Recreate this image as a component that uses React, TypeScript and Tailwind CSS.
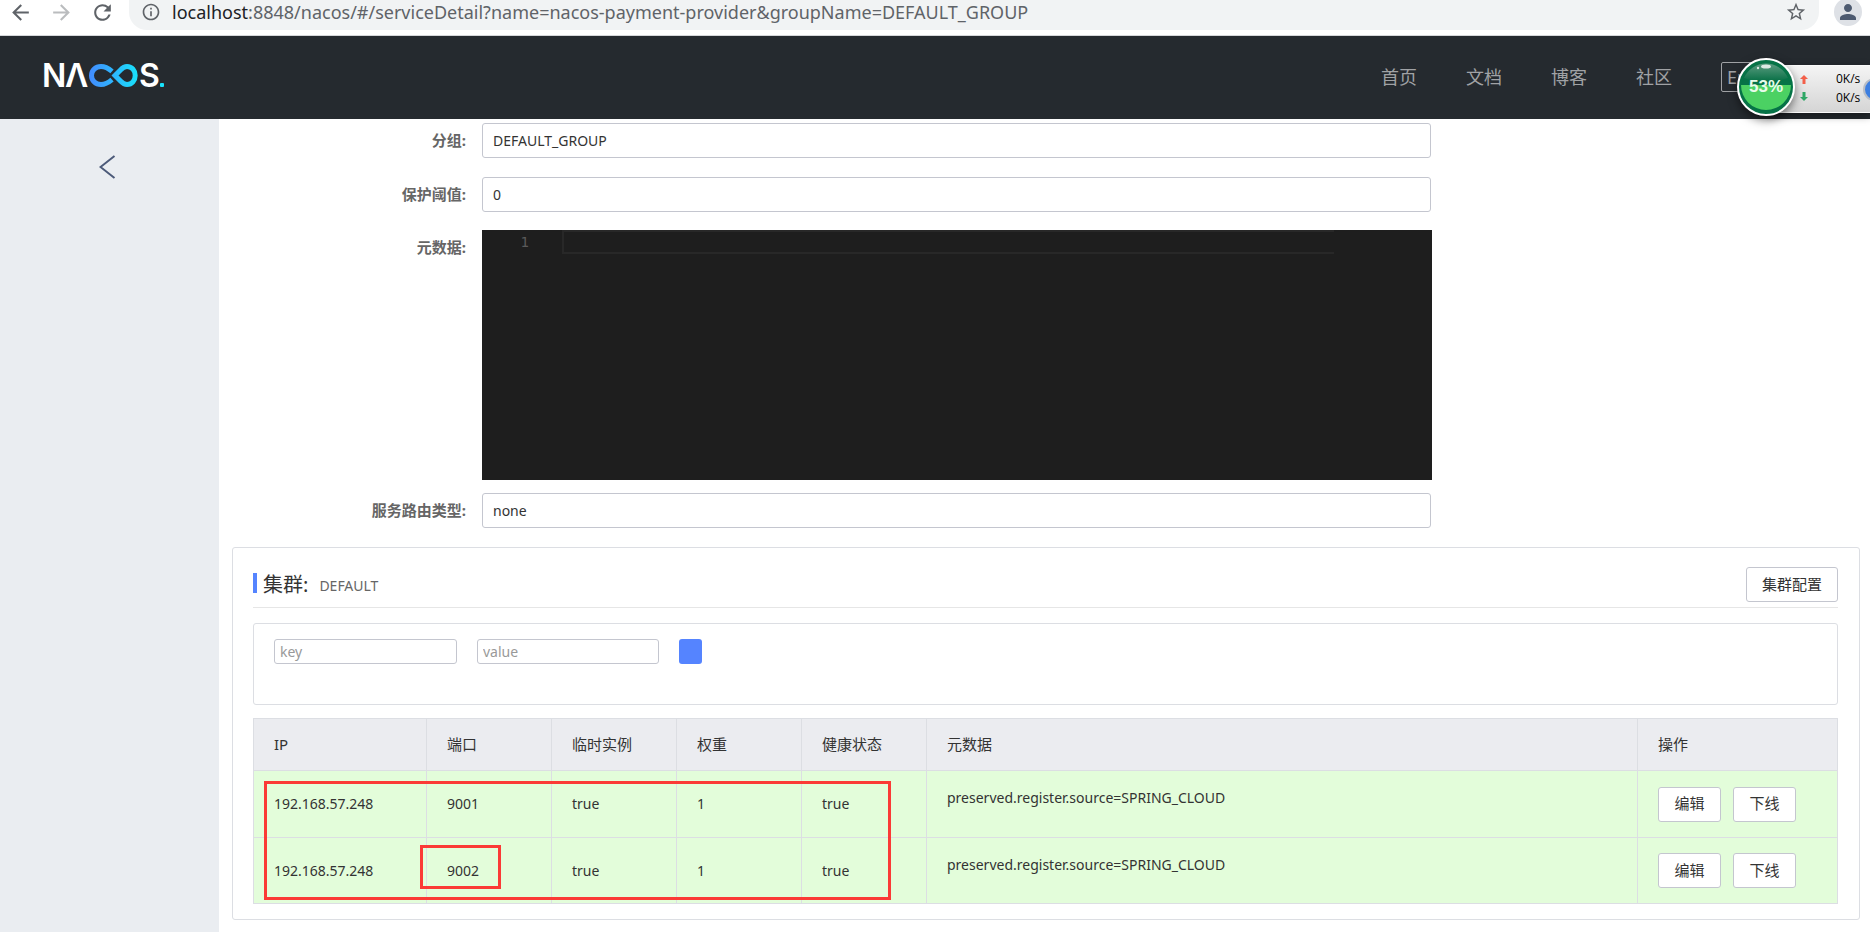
import { MdArrowBack, MdArrowForward, MdRefresh, MdInfoOutline, MdStarBorder, MdPerson } from "react-icons/md";

const navLinks = ["首页", "文档", "博客", "社区"];

const instances = [
  { ip: "192.168.57.248", port: "9001", ephemeral: "true", weight: "1", healthy: "true", metadata: "preserved.register.source=SPRING_CLOUD" },
  { ip: "192.168.57.248", port: "9002", ephemeral: "true", weight: "1", healthy: "true", metadata: "preserved.register.source=SPRING_CLOUD" },
];

const BrowserBar = () => (
  <div className="flex h-9 items-start border-b border-[#d5d7da] bg-white pl-2 pr-2">
    <div className="flex h-6 w-[121px] shrink-0 items-center gap-4 text-[#5f6368]">
      <button aria-label="Back"><MdArrowBack size={25} /></button>
      <button aria-label="Forward" className="text-[#babcbe]"><MdArrowForward size={25} /></button>
      <button aria-label="Reload"><MdRefresh size={25} /></button>
    </div>
    <div className="flex h-[30px] min-w-0 flex-1 items-start rounded-b-[18px] bg-[#f1f3f4] pl-3 pr-3">
      <div className="flex h-6 min-w-0 flex-1 items-center">
        <MdInfoOutline size={20} className="shrink-0 text-[#5f6368]" />
        <span className="ml-[11px] whitespace-nowrap text-[18px] leading-6 text-[#5f6368]">
          <span className="text-[#202124]">localhost</span>
          :8848/nacos/#/serviceDetail?name=nacos-payment-provider&amp;groupName=DEFAULT_GROUP
        </span>
      </div>
      <button aria-label="Bookmark" className="flex h-6 items-center text-[#5f6368]"><MdStarBorder size={22} /></button>
    </div>
    <button aria-label="Profile" className="-mt-[2px] ml-[15px] flex h-7 w-7 items-center justify-center rounded-full bg-[#dee1e6] text-[#4d5a70]">
      <MdPerson size={24} />
    </button>
  </div>
);

const Logo = () => (
  <svg width="132" height="48" viewBox="-6 -11 132 48" role="img" aria-label="NACOS">
    <defs>
      <linearGradient id="loop" x1="44" y1="0" x2="94" y2="0" gradientUnits="userSpaceOnUse">
        <stop offset="0" stopColor="#4489ff" />
        <stop offset="1" stopColor="#18e2fb" />
      </linearGradient>
    </defs>
    <g fill="#fff" fontFamily="Inter, sans-serif" fontWeight="600" fontSize="32">
      <text x="-2" y="23">N</text>
      <text x="21" y="23">Λ</text>
      <text x="95" y="23">S</text>
    </g>
    <g fill="none" stroke="url(#loop)" strokeWidth="5">
      <path d="M68 7.4 C64 4 61 2.5 57 2.5 C51.5 2.5 47.5 6.4 47.5 11.5 C47.5 16.6 51.5 20.5 57 20.5 C61 20.5 64 19 68 15.6" />
      <path d="M71 11.5 L76.5 5.9 C78.7 3.6 80.4 2.5 83 2.5 C88 2.5 91.2 6.6 91.2 11.5 C91.2 16.4 88 20.5 83 20.5 C80.4 20.5 78.7 19.4 76.5 17.1 Z" />
    </g>
    <rect x="116" y="19" width="4" height="4" rx="1" fill="#18e2fb" />
  </svg>
);

const SpeedWidget = () => (
  <div className="absolute right-0 top-[58px] h-[58px] w-[133px]">
    <div className="absolute right-0 top-[7px] flex h-12 w-[103px] items-center overflow-hidden border-y border-[#fafafa] bg-gradient-to-b from-[#f4f4f4] to-[#d5d5d5] pb-[2px] pl-[33px] shadow-[0_3px_8px_rgba(0,0,0,0.4)]">
      <div className="flex flex-col gap-2">
        <svg width="8" height="9" viewBox="0 0 8 9"><path d="M4 0 L8 4 H5.5 V9 H2.5 V4 H0 Z" fill="#f4604a" /></svg>
        <svg width="8" height="9" viewBox="0 0 8 9"><path d="M4 9 L0 5 H2.5 V0 H5.5 V5 H8 Z" fill="#2fa866" /></svg>
      </div>
      <div className="ml-7 flex flex-col whitespace-nowrap font-['Open_Sans',sans-serif] text-xs leading-[19px] text-black">
        <span>0K/s</span>
        <span>0K/s</span>
      </div>
      <span className="absolute -right-4 top-3 h-[23px] w-[23px] rounded-full border-2 border-[#b9bec6] bg-[#3d7fe0]" />
    </div>
    <div className="absolute left-0 top-0 flex h-[58px] w-[58px] items-center justify-center rounded-full border-2 border-white bg-[#067347] shadow-[0_4px_10px_rgba(0,0,0,0.5)]">
      <svg className="absolute inset-[2px]" width="50" height="50" viewBox="0 0 50 50">
        <defs>
          <linearGradient id="shine" x1="0" y1="0" x2="0" y2="1">
            <stop offset="0" stopColor="#5b9b80" />
            <stop offset="1" stopColor="#046e43" />
          </linearGradient>
        </defs>
        <circle cx="25" cy="25" r="24" fill="#067347" />
        <path d="M3 16 A24 24 0 0 1 47 16 Q25 24 3 16 Z" fill="url(#shine)" />
        <path d="M0 23 H50 A25 25 0 0 1 0 23 Z" fill="#4bd163" />
        <ellipse cx="25" cy="4.5" rx="5" ry="2" fill="#fff" opacity="0.8" />
        <circle cx="17" cy="6" r="1.2" fill="#fff" opacity="0.8" />
      </svg>
      <span className="relative font-['Liberation_Sans',sans-serif] text-[17px] font-bold text-[#e8fbea]">53%</span>
    </div>
  </div>
);

const SiteHeader = () => (
  <header className="flex h-[83px] items-center justify-between bg-[#252a2f] pb-[2px] pl-[38px] pr-[116px]">
    <a href="#home"><Logo /></a>
    <nav className="flex items-center gap-[49px] text-lg text-[#a0a2a5]">
      {navLinks.map((label) => (
        <a key={label} href="#nav">{label}</a>
      ))}
      <button className="h-[30px] w-[33px] rounded-[2px] border border-[#a0a2a5] leading-7">En</button>
    </nav>
  </header>
);

const TextField = ({ id, label, value }: { id: string; label: string; value: string }) => (
  <div className="grid grid-cols-[234px_minmax(0,949px)] items-center gap-4">
    <label htmlFor={id} className="text-right text-[15px] font-bold text-[#666]">{label}:</label>
    <input id={id} readOnly defaultValue={value} className="h-[35px] rounded-[3px] border border-[#c4c6cf] px-[10px] text-sm text-[#333]" />
  </div>
);

const MetadataEditor = () => (
  <div className="grid grid-cols-[234px_minmax(0,950px)] gap-4">
    <label htmlFor="metadata" className="pt-[6px] text-right text-[15px] font-bold text-[#666]">元数据:</label>
    <div className="flex h-[250px] bg-[#1e1e1e] pr-[98px]">
      <div className="w-20 shrink-0 pr-[33px] text-right font-['DejaVu_Sans_Mono',monospace] text-sm leading-6 text-[#5a5a5a]">1</div>
      <textarea id="metadata" className="h-6 min-w-0 flex-1 resize-none border-2 border-r-0 border-[#282828] bg-transparent text-white outline-none" />
    </div>
  </div>
);

const ActionButton = ({ children }: { children: string }) => (
  <button className="h-[35px] min-w-[63px] rounded-[3px] border border-[#c4c6cf] bg-white px-[15px] text-[15px] text-[#333]">{children}</button>
);

const th = "border border-[#dcdee3] px-5 text-left font-normal";
const td = "border border-[#dcdee3] px-5";

const InstanceTable = () => (
  <div className="relative mt-[13px]">
    <table className="w-full table-fixed border-collapse text-sm text-[#333]">
      <colgroup>
        <col className="w-[173px]" />
        <col className="w-[125px]" />
        <col className="w-[125px]" />
        <col className="w-[125px]" />
        <col className="w-[125px]" />
        <col />
        <col className="w-[200px]" />
      </colgroup>
      <thead>
        <tr className="h-[52px] bg-[#ebecf0] text-[15px]">
          <th className={th}>IP</th>
          <th className={th}>端口</th>
          <th className={th}>临时实例</th>
          <th className={th}>权重</th>
          <th className={th}>健康状态</th>
          <th className={th}>元数据</th>
          <th className={th}>操作</th>
        </tr>
      </thead>
      <tbody>
        {instances.map((row) => (
          <tr key={row.port} className="h-[67px] bg-[#e3fdda] last:h-[66px]">
            <td className={td}>{row.ip}</td>
            <td className={td}>{row.port}</td>
            <td className={td}>{row.ephemeral}</td>
            <td className={td}>{row.weight}</td>
            <td className={td}>{row.healthy}</td>
            <td className={`${td} pb-3`}>{row.metadata}</td>
            <td className={td}>
              <div className="flex gap-3">
                <ActionButton>编辑</ActionButton>
                <ActionButton>下线</ActionButton>
              </div>
            </td>
          </tr>
        ))}
      </tbody>
    </table>
    {/* Red highlight marks */}
    <div className="pointer-events-none absolute left-[11px] top-[63px] h-[119px] w-[627px] border-3 border-[#fb3a36]" />
    <div className="pointer-events-none absolute left-[167px] top-[127px] h-[44px] w-[81px] border-3 border-[#fb3a36]" />
  </div>
);

const ClusterCard = () => (
  <section className="mt-[19px] rounded-[3px] border border-[#dcdee3] pb-[15px] pl-5 pr-[21px] pt-[19px]">
    <div className="flex items-start justify-between border-b border-[#e6e6e6] pb-1">
      <h2 className="flex items-center gap-[11px]">
        <span className="flex items-center gap-[6px] text-xl leading-9 text-[#333]">
          <span className="mb-1 h-5 w-1 bg-[#5584ff]" />
          集群:
        </span>
        <span className="pt-[2px] text-sm text-[#666]">DEFAULT</span>
      </h2>
      <ActionButton>集群配置</ActionButton>
    </div>
    <form className="mt-[15px] flex h-[82px] items-start gap-5 rounded-[3px] border border-[#dcdee3] px-5 pt-[15px]">
      <input aria-label="key" placeholder="key" className="h-[25px] w-[183px] rounded-[3px] border border-[#c4c6cf] px-[5px] text-sm placeholder:text-[#999]" />
      <input aria-label="value" placeholder="value" className="h-[25px] w-[182px] rounded-[3px] border border-[#c4c6cf] px-[5px] text-sm placeholder:text-[#999]" />
      <button type="button" aria-label="Add filter" className="h-[25px] w-[23px] rounded-[3px] bg-[#5584ff]" />
    </form>
    <InstanceTable />
  </section>
);

const App = () => (
  <div className="relative flex min-h-screen flex-col overflow-hidden bg-white font-['Noto_Sans','Noto_Sans_CJK_SC',sans-serif]">
    <BrowserBar />
    <SiteHeader />
    <div className="flex flex-1">
      <aside className="w-[219px] shrink-0 bg-[#eaedf1] pt-9">
        <button aria-label="Collapse" className="ml-[99px] block">
          <svg width="17" height="24" viewBox="0 0 17 24" fill="none" stroke="#4c5a79" strokeWidth="2">
            <path d="M15.5 1 L1.5 12 L15.5 23" />
          </svg>
        </button>
      </aside>
      <main className="min-w-0 flex-1 pb-3 pl-[13px] pr-[10px] pt-1">
        <div className="flex flex-col">
          <TextField id="group" label="分组" value="DEFAULT_GROUP" />
          <div className="mb-[18px] mt-[19px]">
            <TextField id="threshold" label="保护阈值" value="0" />
          </div>
          <MetadataEditor />
          <div className="mt-[13px]">
            <TextField id="selector" label="服务路由类型" value="none" />
          </div>
        </div>
        <ClusterCard />
      </main>
    </div>
    <SpeedWidget />
  </div>
);

export default App;
